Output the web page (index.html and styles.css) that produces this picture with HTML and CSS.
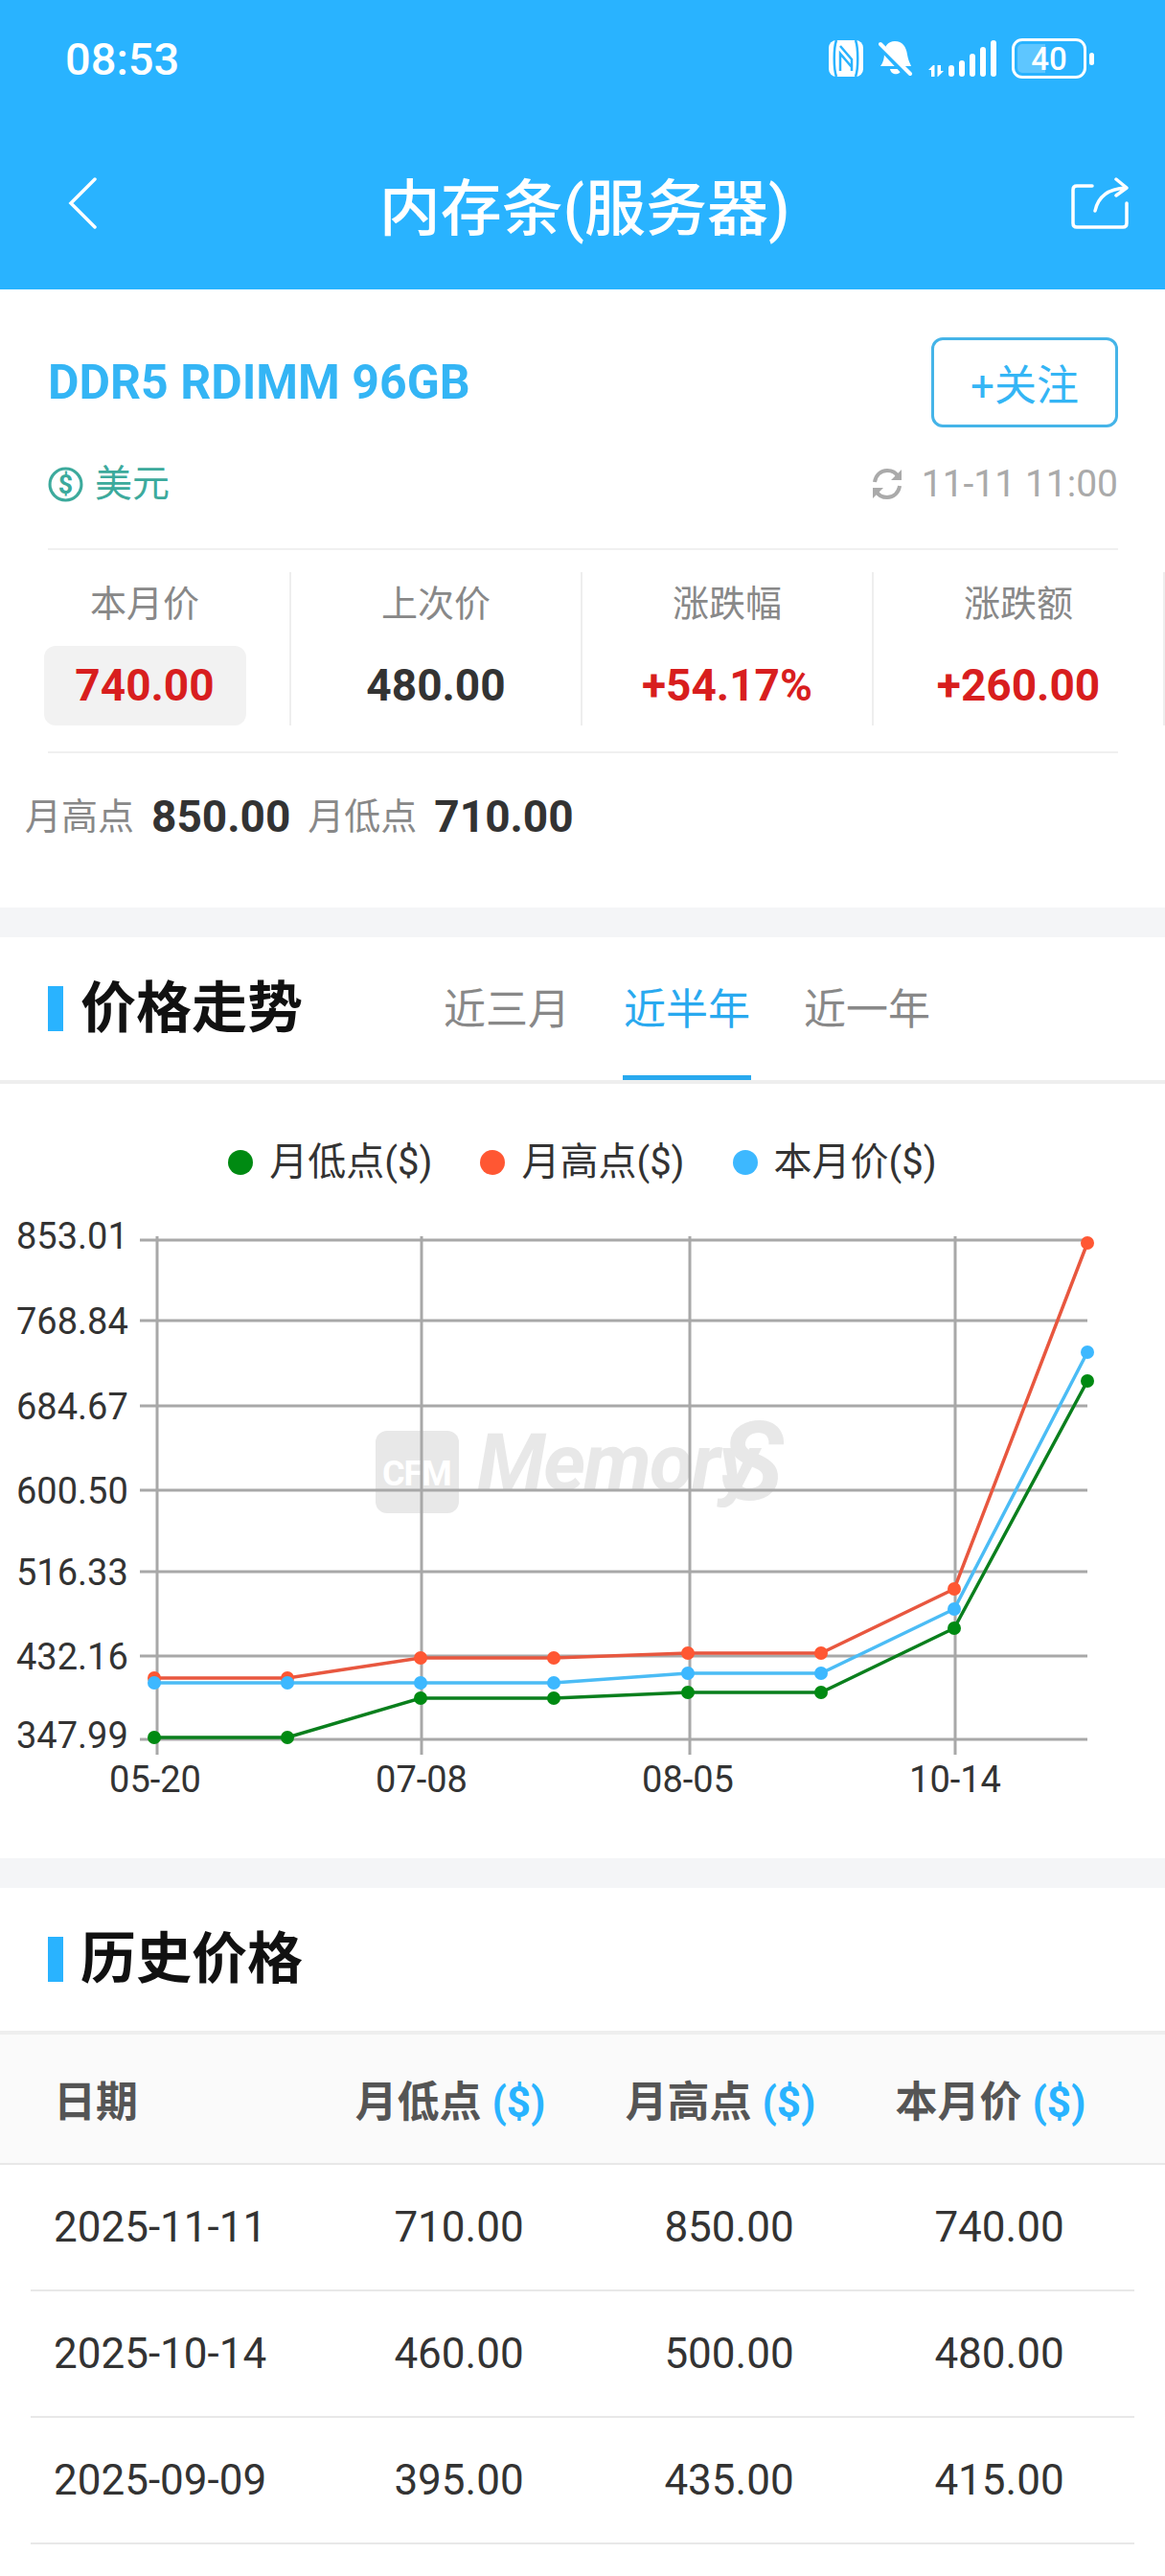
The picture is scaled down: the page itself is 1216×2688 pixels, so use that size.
FILE: index.html
```html
<!DOCTYPE html>
<html>
    <head>
        <meta charset='utf-8'/>
        <title>内存条(服务器)</title>
        <link rel="stylesheet" href="styles.css">
    </head>
    <body>
        <header class='top'>
            <div class='status'>
                <span class='clock'>08:53</span>
                <div class='status-icons'>
                    <svg class='ic-nfc' viewBox='0 0 36 38'>
                        <rect width='36' height='38' rx='8' fill='#fff'/>
                        <path d='M8 0C5 8 5 30 8 38M28 0C31 8 31 30 28 38' stroke='#29b3ff' stroke-width='2.5' fill='none'/>
                        <path d='M12 6L24 20V32M12 32V14L24 28' stroke='#29b3ff' stroke-width='2.5' fill='none'/>
                    </svg>
                    <svg class='ic-bell' viewBox='0 0 36 38'>
                        <path d='M17 1C25 1 29 7 30 15C31 21 33 24 34 27H2C5 23 6 19 6 13C6 6 10 1 17 1Z' fill='#fff'/>
                        <path d='M12 30H24C23 37 13 37 12 30Z' fill='#fff'/>
                        <path d='M-2 2L30 36' stroke='#29b3ff' stroke-width='7'/>
                        <path d='M2 4L33 35' stroke='#fff' stroke-width='4' stroke-linecap='round'/>
                    </svg>
                    <svg class='ic-signal' viewBox='0 0 71 38'>
                        <path d='M5 26L0 31H3V38H6.500V26ZM10 38L16 32H13V26H9.500V38Z' fill='#fff'/>
                        <g stroke='#fff' stroke-width='6' stroke-linecap='round'>
                            <path d='M24 29V35M35 24V35M46 17V35M57 10V35M68 3V35'/>
                        </g>
                    </svg>
                    <div class='battery'>
                        <div class='battery-box'>
                            <span class='battery-fill'></span>
                            <span class='battery-num'>40</span>
                        </div>
                        <span class='battery-nub'></span>
                    </div>
                </div>
            </div>
            <div class='nav'>
                <svg class='ic-back' viewBox='0 0 32 54'>
                    <path d='M29 2L4 27L29 52' stroke='#fff' stroke-width='3.500' fill='none' stroke-linecap='round'/>
                </svg>
                <h1 class='nav-title'>内存条(服务器)</h1>
                <svg class='ic-share' viewBox='0 0 60 54'>
                    <path d='M22 9H6C3.500 9 2 10.500 2 13V48C2 50.500 3.500 52 6 52H54C56.500 52 58 50.500 58 48V27' stroke='#fff' stroke-width='3.500' fill='none' stroke-linecap='round'/>
                    <path d='M25 35C28 21 38 12 57 11M47 2L58 11L47 19' stroke='#fff' stroke-width='3.500' fill='none' stroke-linecap='round' stroke-linejoin='round'/>
                </svg>
            </div>
        </header>

        <section class='product'>
            <div class='product-head'>
                <h2 class='product-name'>DDR5 RDIMM 96GB</h2>
                <button class='follow'>+关注</button>
            </div>
            <div class='meta'>
                <div class='currency'>
                    <svg class='ic-dollar' viewBox='0 0 36 36'>
                        <circle cx='18' cy='18' r='16' stroke='#3caa9c' stroke-width='3' fill='none'/>
                        <text x='18' y='27' class='dollar-mark'>$</text>
                    </svg>
                    <span>美元</span>
                </div>
                <div class='update'>
                    <svg class='ic-refresh' viewBox='0 0 36 36'>
                        <path d='M5 16C6 9 11 4 18 4C23 4 27 6 29 10M31 20C30 27 25 32 18 32C13 32 9 30 7 26' stroke='#aaa' stroke-width='4' fill='none'/>
                        <path d='M33 3V14H22ZM3 33V22H14Z' fill='#aaa'/>
                    </svg>
                    <span>11-11 11:00</span>
                </div>
            </div>
            <div class='stats'>
                <div class='stat'>
                    <div class='stat-label'>本月价</div>
                    <div class='stat-value red chip'>740.00</div>
                </div>
                <div class='stat'>
                    <div class='stat-label'>上次价</div>
                    <div class='stat-value'>480.00</div>
                </div>
                <div class='stat'>
                    <div class='stat-label'>涨跌幅</div>
                    <div class='stat-value red'>+54.17%</div>
                </div>
                <div class='stat'>
                    <div class='stat-label'>涨跌额</div>
                    <div class='stat-value red'>+260.00</div>
                </div>
            </div>
            <div class='range'>
                <span class='range-label'>月高点</span>
                <b class='range-value'>850.00</b>
                <span class='range-label'>月低点</span>
                <b class='range-value'>710.00</b>
            </div>
        </section>

        <section class='trend'>
            <div class='section-head tabs-head'>
                <h3 class='section-title'>价格走势</h3>
                <div class='tabs'>
                    <span class='tab'>近三月</span>
                    <span class='tab active'>近半年</span>
                    <span class='tab'>近一年</span>
                </div>
            </div>
            <div class='legend'>
                <span class='legend-item'><i class='dot green'></i>月低点($)</span>
                <span class='legend-item'><i class='dot orange'></i>月高点($)</span>
                <span class='legend-item'><i class='dot blue'></i>本月价($)</span>
            </div>
            <svg class='chart' viewBox='0 1240 1216 700'>
                <!-- 水印 -->
                <rect x='392' y='1494' width='87' height='86' rx='12' fill='#e8e8e8'/>
                <text x='399' y='1551' class='mark-cfm'>CFM</text>
                <text x='498' y='1556' class='mark-name'>Memory</text>
                <text x='0' y='0' class='mark-s' transform='translate(752 1566) scale(1.1 1.15)'>S</text>

                <g class='grid'>
                    <path d='M146 1295H1135M146 1379H1135M146 1468H1135M146 1556H1135M146 1641H1135M146 1729H1135M146 1816H1135'/>
                    <path d='M164 1291V1832M440 1291V1832M720 1291V1832M997 1291V1832'/>
                </g>

                <g class='axis-y'>
                    <text x='17' y='1304'>853.01</text>
                    <text x='17' y='1393'>768.84</text>
                    <text x='17' y='1482'>684.67</text>
                    <text x='17' y='1570'>600.50</text>
                    <text x='17' y='1655'>516.33</text>
                    <text x='17' y='1743'>432.16</text>
                    <text x='17' y='1825'>347.99</text>
                </g>
                <g class='axis-x'>
                    <text x='162' y='1871'>05-20</text>
                    <text x='440' y='1871'>07-08</text>
                    <text x='718' y='1871'>08-05</text>
                    <text x='997' y='1871'>10-14</text>
                </g>

                <!-- 月低点 -->
                <polyline class='line' stroke='#0a7f1d' points='161,1814 300,1814 439,1773 578,1773 718,1767 857,1767 996,1700 1135,1442'/>
                <g fill='#008a12'>
                    <circle cx='161' cy='1814' r='7'/><circle cx='300' cy='1814' r='7'/><circle cx='439' cy='1773' r='7'/><circle cx='578' cy='1773' r='7'/>
                    <circle cx='718' cy='1767' r='7'/><circle cx='857' cy='1767' r='7'/><circle cx='996' cy='1700' r='7'/><circle cx='1135' cy='1442' r='7'/>
                </g>
                <!-- 月高点 -->
                <polyline class='line' stroke='#e8573f' points='161,1752 300,1752 439,1731 578,1731 718,1726 857,1726 996,1659 1135,1298'/>
                <g fill='#ff5733'>
                    <circle cx='161' cy='1752' r='7'/><circle cx='300' cy='1752' r='7'/><circle cx='439' cy='1731' r='7'/><circle cx='578' cy='1731' r='7'/>
                    <circle cx='718' cy='1726' r='7'/><circle cx='857' cy='1726' r='7'/><circle cx='996' cy='1659' r='7'/><circle cx='1135' cy='1298' r='7'/>
                </g>
                <!-- 本月价 -->
                <polyline class='line' stroke='#4bbcf5' points='161,1757 300,1757 439,1757 578,1757 718,1747 857,1747 996,1680 1135,1412'/>
                <g fill='#3db8ff'>
                    <circle cx='161' cy='1757' r='7'/><circle cx='300' cy='1757' r='7'/><circle cx='439' cy='1757' r='7'/><circle cx='578' cy='1757' r='7'/>
                    <circle cx='718' cy='1747' r='7'/><circle cx='857' cy='1747' r='7'/><circle cx='996' cy='1680' r='7'/><circle cx='1135' cy='1412' r='7'/>
                </g>
            </svg>
        </section>

        <section class='history'>
            <div class='section-head'>
                <h3 class='section-title'>历史价格</h3>
            </div>
            <div class='table'>
                <div class='table-row table-head'>
                    <span class='cell-date'>日期</span>
                    <span class='cell-num'>月低点 <em>($)</em></span>
                    <span class='cell-num'>月高点 <em>($)</em></span>
                    <span class='cell-num'>本月价 <em>($)</em></span>
                </div>
                <div class='table-row'>
                    <span class='cell-date'>2025-11-11</span>
                    <span class='cell-num'>710.00</span>
                    <span class='cell-num'>850.00</span>
                    <span class='cell-num'>740.00</span>
                </div>
                <div class='table-row'>
                    <span class='cell-date'>2025-10-14</span>
                    <span class='cell-num'>460.00</span>
                    <span class='cell-num'>500.00</span>
                    <span class='cell-num'>480.00</span>
                </div>
                <div class='table-row'>
                    <span class='cell-date'>2025-09-09</span>
                    <span class='cell-num'>395.00</span>
                    <span class='cell-num'>435.00</span>
                    <span class='cell-num'>415.00</span>
                </div>
            </div>
        </section>
    </body>
</html>
```

FILE: styles.css
```css
*{
    box-sizing: border-box;
}
body{
    margin: 0;
    background-color: #fff;
    color: #333;
    font-family: Roboto, "Noto Sans CJK SC", sans-serif;
}
h1,h2,h3{
    margin: 0;
}

/* 顶部 */
.top{
    height: 302px;
    background-color: #29b3ff;
    color: #fff;
}
.status{
    height: 122px;
    padding: 0 74px 0 68px;
    display: flex;
    align-items: center;
    justify-content: space-between;
}
.clock{
    font-size: 47px;
    font-weight: 500;
}
.status-icons{
    display: flex;
    align-items: center;
    gap: 16px;
}
.ic-nfc{
    width: 36px;
    height: 38px;
}
.ic-bell{
    width: 36px;
    height: 38px;
}
.ic-signal{
    width: 71px;
    height: 38px;
}
.battery{
    display: flex;
    align-items: center;
    gap: 3px;
}
.battery-box{
    position: relative;
    width: 78px;
    height: 42px;
    border: 3px solid #fff;
    border-radius: 11px;
    display: flex;
    align-items: center;
    justify-content: center;
    overflow: hidden;
}
.battery-fill{
    position: absolute;
    left: 3px;
    top: 3px;
    bottom: 3px;
    width: 29px;
    border-radius: 5px 0 0 5px;
    background-color: rgba(255,255,255,0.25);
}
.battery-num{
    position: relative;
    font-size: 33px;
    font-weight: 500;
}
.battery-nub{
    width: 5px;
    height: 13px;
    border-radius: 3px;
    background-color: #fff;
}
.nav{
    height: 180px;
    padding: 0 38px 0 70px;
    display: flex;
    align-items: center;
    justify-content: space-between;
}
.ic-back{
    width: 32px;
    height: 54px;
}
.ic-share{
    width: 60px;
    height: 54px;
}
.nav-title{
    font-size: 64px;
    font-weight: 500;
}

/* 产品信息 */
.product{
    padding: 50px 0 65px;
    border-bottom: 31px solid #f4f5f7;
    height: 676px;
}
.product-head{
    padding: 0 49px 0 50px;
    display: flex;
    align-items: center;
    justify-content: space-between;
}
.product-name{
    font-size: 50px;
    font-weight: 700;
    color: #34b5f5;
}
.follow{
    width: 195px;
    height: 94px;
    padding: 0;
    border: 3px solid #45b4e8;
    border-radius: 12px;
    background-color: #fff;
    color: #34b5f5;
    font-family: inherit;
    font-size: 44px;
}
.meta{
    margin: 34px 49px 0 50px;
    padding-bottom: 42px;
    border-bottom: 2px solid #f0f0f0;
    display: flex;
    align-items: center;
    justify-content: space-between;
    font-size: 39px;
    line-height: 50px;
}
.currency{
    display: flex;
    align-items: center;
    gap: 12px;
    color: #3caa9c;
}
.ic-dollar{
    width: 37px;
    height: 37px;
}
.dollar-mark{
    fill: #3caa9c;
    font-size: 26px;
    font-weight: 700;
    text-anchor: middle;
}
.update{
    display: flex;
    align-items: center;
    gap: 18px;
    color: #aaa;
}
.ic-refresh{
    width: 36px;
    height: 36px;
}
.stats{
    margin-top: 23px;
    display: grid;
    grid-template-columns: repeat(4, 1fr);
}
.stat{
    height: 160px;
    border-right: 2px solid #eee;
    display: flex;
    flex-direction: column;
    align-items: center;
}
.stat-label{
    height: 66px;
    line-height: 66px;
    font-size: 38px;
    color: #888;
}
.stat-value{
    margin-top: 11px;
    height: 83px;
    line-height: 83px;
    font-size: 46px;
    font-weight: 700;
}
.red{
    color: #d81e1e;
}
.chip{
    width: 211px;
    border-radius: 12px;
    background-color: #f2f2f2;
    text-align: center;
}
.range{
    margin: 27px 49px 0 50px;
    padding: 36px 0 0 0;
    border-top: 2px solid #f0f0f0;
    display: flex;
    align-items: center;
    line-height: 60px;
    margin-left: 50px;
}
.range-label{
    font-size: 38px;
    color: #888;
    margin-left: 18px;
}
.range-label:first-child{
    margin-left: -24px;
}
.range-value{
    margin-left: 18px;
    font-size: 46px;
    color: #333;
}

/* 价格走势 */
.section-head{
    height: 153px;
    padding-left: 50px;
    border-bottom: 4px solid #eee;
    display: flex;
    align-items: center;
}
.section-title{
    padding-left: 34px;
    font-size: 58px;
    font-weight: 700;
    color: #111;
    line-height: 47px;
    position: relative;
}
.section-title::before{
    content: '';
    position: absolute;
    left: 0;
    top: 0;
    width: 16px;
    height: 47px;
    background-color: #29b3ff;
}
.tabs{
    margin-left: 146px;
    display: flex;
    gap: 54px;
    height: 100%;
}
.tab{
    height: 100%;
    padding: 0 1px;
    display: flex;
    align-items: center;
    font-size: 44px;
    color: #888;
    border-bottom: 5px solid transparent;
}
.tab.active{
    color: #29a9ef;
    border-bottom-color: #29a9ef;
    margin-bottom: -4px;
    height: calc(100% + 0px);
}
.legend{
    padding-top: 56px;
    height: 108px;
    display: flex;
    justify-content: center;
    gap: 50px;
    font-size: 40px;
    line-height: 52px;
    color: #333;
}
.legend-item{
    display: flex;
    align-items: center;
    gap: 17px;
}
.dot{
    width: 26px;
    height: 26px;
    border-radius: 50%;
}
.green{
    background-color: #008a12;
}
.orange{
    background-color: #ff5733;
}
.blue{
    background-color: #3db8ff;
}
.chart{
    display: block;
    width: 1216px;
    height: 700px;
}
.grid path{
    stroke: #a8a8a8;
    stroke-width: 3;
    fill: none;
}
.axis-y text,.axis-x text{
    font-size: 38px;
    fill: #333;
}
.axis-x text{
    text-anchor: middle;
}
.line{
    fill: none;
    stroke-width: 3.5;
}
.mark-cfm{
    font-size: 36px;
    font-weight: 700;
    fill: #fff;
    letter-spacing: -1px;
}
.mark-name{
    font-size: 84px;
    font-weight: 700;
    font-style: italic;
    fill: #e8e8e8;
    letter-spacing: -2px;
}
.mark-s{
    font-size: 100px;
    font-weight: 700;
    font-style: italic;
    fill: #e8e8e8;
}

/* 历史价格 */
.history{
    border-top: 31px solid #f4f5f7;
}
.table-row{
    margin: 0 32px;
    height: 132px;
    border-bottom: 2px solid #e8e8e8;
    display: grid;
    grid-template-columns: 306px repeat(3, 1fr);
    align-items: center;
    font-size: 44px;
    color: #333;
}
.table-head{
    margin: 0;
    padding: 0 32px;
    height: 136px;
    background-color: #fafafa;
    font-weight: 700;
    color: #555;
}
.cell-date{
    padding-left: 24px;
}
.cell-num{
    text-align: center;
}
.table-head .cell-num{
    padding-right: 18px;
}
.table-head em{
    font-style: normal;
    color: #29b3ff;
}
```
